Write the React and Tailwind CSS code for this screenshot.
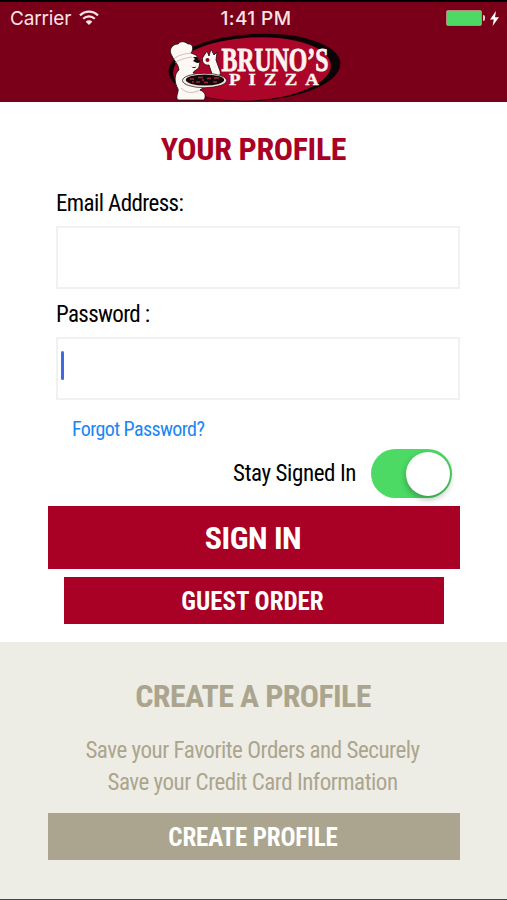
import React, { useState } from 'react';

const WifiIcon = () => (
  <svg width="20" height="16" viewBox="0 0 20 16" className="mt-[-2px] ml-[8px]" fill="none" stroke="#fbe3e6" strokeWidth="2.2">
    <path d="M1 5.4C6.2 0.4 13.8 0.4 19 5.4" />
    <path d="M4.2 8.8C7.6 5.6 12.4 5.6 15.8 8.8" />
    <path d="M10 15L6.7 11.7C8.6 9.9 11.4 9.9 13.3 11.7Z" fill="#fbe3e6" stroke="none" />
  </svg>
);

const Battery = () => (
  <div className="flex items-center">
    <div className="h-4 w-[36px] rounded-[2px] border border-[#b58a7c] bg-[#4cd964]" />
    <div className="ml-px h-[6px] w-[2px] rounded-r bg-[#f0c9ce]" />
    <svg width="9" height="15" viewBox="0 0 9 15" className="ml-[5px]" fill="#fff">
      <path d="M6 0L0 8.4H3.8L2.6 15L9 6.2H5Z" />
    </svg>
  </div>
);

const Logo = () => (
  <svg width="176" height="70" viewBox="0 0 176 70" className="block">
    {/* plate */}
    <ellipse cx="88.5" cy="35.5" rx="86" ry="33.5" fill="#0d0205" transform="rotate(-3 88.5 35.5)" />
    <ellipse cx="86" cy="37" rx="79" ry="31.5" fill="#ab0529" transform="rotate(-3 86 37)" />
    {/* chef */}
    <path
      d="M12 34C10 30 8 28 6 24C2 18 6 12 12 12C15 8 20 10 22 12C27 11 28 17 25 21L30 23L34 29L33 35C32 38 28 38 27 41L40 43L46 42L43 33C38 34 35 29 37 25L41 19L43 24L45 17L48 23L51 20L50 28L54 39C55 43 53 46 50 48L40 54L34 58C40 60 40 65 38 68H12C9 65 13 60 12 57C8 50 8 42 13 38Z"
      fill="#fdf8f3"
      stroke="#1a0509"
      strokeWidth="0.8"
    />
    <path d="M8 27C12 23 18 22 25 21M9 31C14 27 20 26 26 25M15 56C20 61 26 62 34 58" fill="none" stroke="#b5a8a0" strokeWidth="0.7" />
    <path d="M27 25L31 25L33 28C35 29 34 31 31 31L27 29L29 27ZM25 34C27 36 30 35 31 34L29 36H27Z" fill="#12080a" />
    <circle cx="41.5" cy="28" r="2" fill="#8d0524" />
    {/* pizza */}
    <ellipse cx="38.5" cy="48.5" rx="22" ry="7.2" fill="#f2e9e2" stroke="#2a0a10" strokeWidth="0.7" />
    <ellipse cx="39" cy="48" rx="19.2" ry="5.5" fill="#16080a" />
    <path d="M24 47H28M30 50H34M32 45.5H37M38 50.5H42M41 46.5H45M47 50H51M48 46H53M26 50H28M36 48H38" stroke="#982a3c" strokeWidth="1.5" />
    <g fontFamily="Liberation Serif, serif" fontWeight="700" fill="#fdf4ee" stroke="#fdf4ee">
      <text x="55.5" y="38.7" fontSize="34" strokeWidth="0.9" textLength="107" lengthAdjust="spacingAndGlyphs">BRUNO’S</text>
      <text x="63" y="53.3" fontSize="16" strokeWidth="0.4" letterSpacing="7" textLength="98" lengthAdjust="spacingAndGlyphs">PIZZA</text>
    </g>
  </svg>
);

const Toggle = ({ checked, onChange }) => (
  <button
    type="button"
    role="switch"
    aria-checked={checked}
    onClick={() => onChange(!checked)}
    className={`flex h-[49px] w-[81px] items-center rounded-full p-[2px] ${checked ? 'justify-end bg-[#4cd964]' : 'justify-start bg-gray-300'}`}
  >
    <span className="size-[44px] rounded-full bg-white shadow-[0_3px_6px_rgba(0,0,0,0.3)]" />
  </button>
);

const App = () => {
  const [email, setEmail] = useState('');
  const [staySignedIn, setStaySignedIn] = useState(true);

  return (
    <div className="flex h-[900px] w-[507px] flex-col border-t-2 border-b border-t-black border-b-[#444] bg-white font-['Roboto_Condensed','Roboto',sans-serif] [font-stretch:75%]">
      <header className="h-[100px] shrink-0 bg-[#7a0019]">
        <div className="grid h-8 grid-cols-3 items-center pr-2 pl-[10px] font-['Inter',sans-serif] text-[19px] text-[#fbe3e6] [font-stretch:100%]">
          <div className="flex items-center pt-0.5">
            <span className="tracking-[-0.15px]">Carrier</span>
            <WifiIcon />
          </div>
          <div className="pt-0.5 pl-[3px] text-center font-medium tracking-[0.4px]">1:41 PM</div>
          <div className="flex justify-end">
            <Battery />
          </div>
        </div>
        <div className="-mt-0.5 ml-[166px]">
          <Logo />
        </div>
      </header>

      <main className="flex h-[540px] shrink-0 flex-col pr-[47px] pl-14">
        <h1 className="mt-[27px] mr-[9px] text-center text-[32px] leading-10 font-bold tracking-[-0.35px] text-[#a90026]">YOUR PROFILE</h1>
        <label htmlFor="email" className="mt-5 text-[23px] leading-[30px] tracking-[-0.6px] text-black">Email Address:</label>
        <input
          id="email"
          type="email"
          className="mt-[7px] h-[63px] w-full border-2 border-[#f1f1ef] px-1 text-[23px] outline-none"
          value={email}
          onChange={(e) => setEmail(e.target.value)}
        />
        <label className="mt-[11px] text-[23px] leading-[30px] tracking-[-0.65px] text-black">Password :</label>
        <div className="mt-[7px] flex h-[63px] w-full border-2 border-[#f1f1ef] pt-3 pl-[3px]">
          {/* caret */}
          <span className="h-[29px] w-[3px] rounded-sm bg-[#4169e1]" />
        </div>
        <a href="#" className="mt-4 ml-4 text-[20px] leading-[26px] tracking-[-0.6px] text-[#1a86f5]">Forgot Password?</a>
        <div className="mt-[7px] flex items-center justify-end gap-[15px] pr-2">
          <span className="pt-0.5 text-[23px] tracking-[-0.4px] text-black">Stay Signed In</span>
          <Toggle checked={staySignedIn} onChange={setStaySignedIn} />
        </div>
        <button className="mt-2 -ml-2 h-[63px] shrink-0 bg-[#a90026] pt-px pr-0.5 text-[32px] leading-none font-bold tracking-[-0.5px] text-white">SIGN IN</button>
        <button className="mt-2 mr-4 ml-2 h-[47px] shrink-0 bg-[#a90026] pt-0.5 pr-[3px] text-[25px] leading-none font-bold text-white">GUEST ORDER</button>
      </main>

      <section className="flex flex-1 flex-col bg-[#eeede5] pr-[47px] pl-12 text-center text-[#aba58f]">
        <h2 className="mt-[34px] pr-0.5 text-[32px] leading-10 font-bold tracking-[-0.65px]">CREATE A PROFILE</h2>
        <p className="mt-[19px] pr-[3px] text-[23px] leading-8 tracking-[-0.47px]">
          Save your Favorite Orders and Securely
          <br />
          Save your Credit Card Information
        </p>
        <button className="mt-[14px] h-[47px] bg-[#aba58f] pt-px pr-0.5 text-[25px] leading-none font-bold tracking-[-0.15px] text-white">CREATE PROFILE</button>
      </section>
    </div>
  );
};

export default App;
